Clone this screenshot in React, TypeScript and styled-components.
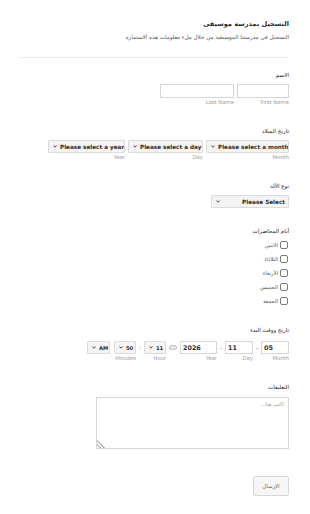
import React from "react";
import styled, { createGlobalStyle } from "styled-components";

const GlobalStyle = createGlobalStyle`
  html, body {
    margin: 0;
    padding: 0;
    background: #ffffff;
  }
  body {
    font-family: "DejaVu Sans", sans-serif;
    color: #333;
  }
  * {
    box-sizing: border-box;
  }
`;

const Page = styled.form`
  direction: rtl;
  width: 310px;
  padding: 18px 21px 19px 18px;
  display: flex;
  flex-direction: column;
`;

const Title = styled.h1`
  margin: 0;
  font-size: 6.6px;
  line-height: 12px;
  font-weight: bold;
  color: #2c2c2c;
`;

const Subtitle = styled.p`
  margin: 3px 0 0;
  font-size: 5.6px;
  line-height: 8px;
  color: #555;
`;

const Divider = styled.hr`
  margin: 16px 0 0;
  border: 0;
  border-top: 1px solid #ececec;
`;

const Field = styled.div<{ $top: number }>`
  margin-top: ${(p) => p.$top}px;
  display: flex;
  flex-direction: column;
  align-items: flex-start;
`;

const Label = styled.label<{ $gap?: number }>`
  display: block;
  font-size: 5.6px;
  line-height: 10px;
  font-weight: normal;
  color: #1e1e1e;
  margin-bottom: ${(p) => p.$gap ?? 4}px;
`;

const Row = styled.div<{ $gap?: number }>`
  display: flex;
  align-items: flex-start;
  gap: ${(p) => p.$gap ?? 3}px;
`;

const Col = styled.div<{ $w: number }>`
  width: ${(p) => p.$w}px;
  display: flex;
  flex-direction: column;
  align-items: stretch;
`;

const Sub = styled.span`
  display: block;
  font-size: 5.3px;
  line-height: 9px;
  color: #9a9a9a;
  text-align: right;
  white-space: nowrap;
`;

const TextInput = styled.input<{ $h?: number }>`
  width: 100%;
  height: ${(p) => p.$h ?? 14}px;
  margin: 0;
  padding: 0 2px;
  border: 1px solid #d6d6d6;
  border-radius: 0;
  background: #fff;
  font-family: "DejaVu Sans", sans-serif;
  font-size: 6.4px;
  font-weight: bold;
  color: #333;
  outline: none;
`;

const DateInput = styled(TextInput)`
  direction: ltr;
  text-align: left;
`;

const SelectBox = styled.div<{ $h?: number; $w?: number; $small?: boolean }>`
  direction: ltr;
  display: flex;
  align-items: center;
  justify-content: space-between;
  gap: 3px;
  width: ${(p) => (p.$w ? `${p.$w}px` : "100%")};
  height: ${(p) => p.$h ?? 13}px;
  padding: 0 3px 0 4px;
  border: 1px solid #dcdcdc;
  border-radius: 1px;
  background: #f4f4f4;
  font-size: ${(p) => (p.$small ? 5.2 : 5.7)}px;
  font-weight: 600;
  color: #2a2a2a;
  white-space: nowrap;
  overflow: hidden;
`;

const Chevron = () => (
  <svg width="4" height="3" viewBox="0 0 4 3" style={{ flexShrink: 0 }}>
    <path d="M0.4 0.5 L2 2.2 L3.6 0.5" fill="none" stroke="#333" strokeWidth="0.9" />
  </svg>
);

const Sep = styled.span<{ $w: number }>`
  width: ${(p) => p.$w}px;
  height: 13px;
  display: flex;
  align-items: center;
  justify-content: center;
  font-size: 6px;
  color: #666;
  flex-shrink: 0;
`;

const CheckList = styled.div`
  display: flex;
  flex-direction: column;
  margin-top: 1px;
`;

const CheckRow = styled.label`
  display: flex;
  align-items: center;
  gap: 2px;
  height: 14px;
  padding-right: 1px;
  font-size: 5.3px;
  color: #555;
`;

const Box = styled.span`
  width: 8px;
  height: 8px;
  border: 1px solid #7a7a7a;
  border-radius: 2px;
  background: #fff;
  flex-shrink: 0;
`;

const TextArea = styled.textarea`
  width: 193px;
  height: 52px;
  margin: 0;
  padding: 3px 4px;
  border: 1px solid #d6d6d6;
  border-radius: 0;
  font-family: "DejaVu Sans", sans-serif;
  font-size: 5.4px;
  color: #333;
  resize: both;
  outline: none;
  &::placeholder {
    color: #999;
  }
  &::-webkit-resizer {
    background: linear-gradient(
      225deg,
      transparent 0 72%,
      #bdbdbd 72% 77%,
      transparent 77% 86%,
      #bdbdbd 86% 91%,
      transparent 91%
    );
  }
`;

const SubmitButton = styled.button`
  margin-top: 27px;
  width: 36px;
  height: 20px;
  padding: 0;
  border: 1px solid #d8d8d8;
  border-radius: 2px;
  background: #f6f6f6;
  font-family: "DejaVu Sans", sans-serif;
  font-size: 5.4px;
  color: #666;
`;

const CalendarIcon = () => (
  <svg width="8" height="5" viewBox="0 0 8 5">
    <rect x="0.5" y="0.8" width="7" height="3.4" rx="1.7" fill="none" stroke="#999" strokeWidth="0.8" />
    <line x1="1.4" y1="2.5" x2="6.6" y2="2.5" stroke="#ccc" strokeWidth="0.6" />
  </svg>
);

const days = ["الاثنين", "الثلاثاء", "الأربعاء", "الخميس", "الجمعة"];

const App = () => {
  return (
    <>
      <GlobalStyle />
      <Page onSubmit={(e) => e.preventDefault()}>
        <Title>التسجيل بمدرسة موسيقى</Title>
        <Subtitle>التسجيل في مدرستنا الموسيقية من خلال ملء معلومات هذه الاستمارة</Subtitle>
        <Divider />

        <Field $top={12}>
          <Label>الاسم</Label>
          <Row>
            <Col $w={52}>
              <TextInput />
              <Sub>First Name</Sub>
            </Col>
            <Col $w={74}>
              <TextInput />
              <Sub>Last Name</Sub>
            </Col>
          </Row>
        </Field>

        <Field $top={19}>
          <Label>تاريخ الميلاد</Label>
          <Row>
            <Col $w={83}>
              <SelectBox>
                <Chevron />
                <span>Please select a month</span>
              </SelectBox>
              <Sub>Month</Sub>
            </Col>
            <Col $w={75}>
              <SelectBox>
                <Chevron />
                <span>Please select a day</span>
              </SelectBox>
              <Sub>Day</Sub>
            </Col>
            <Col $w={77}>
              <SelectBox>
                <Chevron />
                <span>Please select a year</span>
              </SelectBox>
              <Sub>Year</Sub>
            </Col>
          </Row>
        </Field>

        <Field $top={19}>
          <Label>نوع الآلة</Label>
          <SelectBox $w={78} $h={13}>
            <Chevron />
            <span>Please Select</span>
          </SelectBox>
        </Field>

        <Field $top={18}>
          <Label $gap={1}>أيام المحاضرات</Label>
          <CheckList>
            {days.map((d) => (
              <CheckRow key={d}>
                <Box />
                {d}
              </CheckRow>
            ))}
          </CheckList>
        </Field>

        <Field $top={17}>
          <Label $gap={6}>تاريخ ووقت البدء</Label>
          <Row $gap={0}>
            <Col $w={28}>
              <DateInput defaultValue="05" $h={13} />
              <Sub>Month</Sub>
            </Col>
            <Sep $w={8}>-</Sep>
            <Col $w={28}>
              <DateInput defaultValue="11" $h={13} />
              <Sub>Day</Sub>
            </Col>
            <Sep $w={8}>-</Sep>
            <Col $w={37}>
              <DateInput defaultValue="2026" $h={13} />
              <Sub>Year</Sub>
            </Col>
            <Sep $w={14}>
              <CalendarIcon />
            </Sep>
            <Col $w={22}>
              <SelectBox $small>
                <Chevron />
                <span>11</span>
              </SelectBox>
              <Sub>Hour</Sub>
            </Col>
            <Sep $w={8}>:</Sep>
            <Col $w={22}>
              <SelectBox $small>
                <Chevron />
                <span>50</span>
              </SelectBox>
              <Sub>Minutes</Sub>
            </Col>
            <Sep $w={4} />
            <Col $w={23}>
              <SelectBox $small>
                <Chevron />
                <span>AM</span>
              </SelectBox>
            </Col>
          </Row>
        </Field>

        <Field $top={19}>
          <Label $gap={5}>التعليقات</Label>
          <TextArea placeholder="اكتب هنا..." />
        </Field>

        <Field $top={0}>
          <SubmitButton type="submit">الإرسال</SubmitButton>
        </Field>
      </Page>
    </>
  );
};

export default App;
